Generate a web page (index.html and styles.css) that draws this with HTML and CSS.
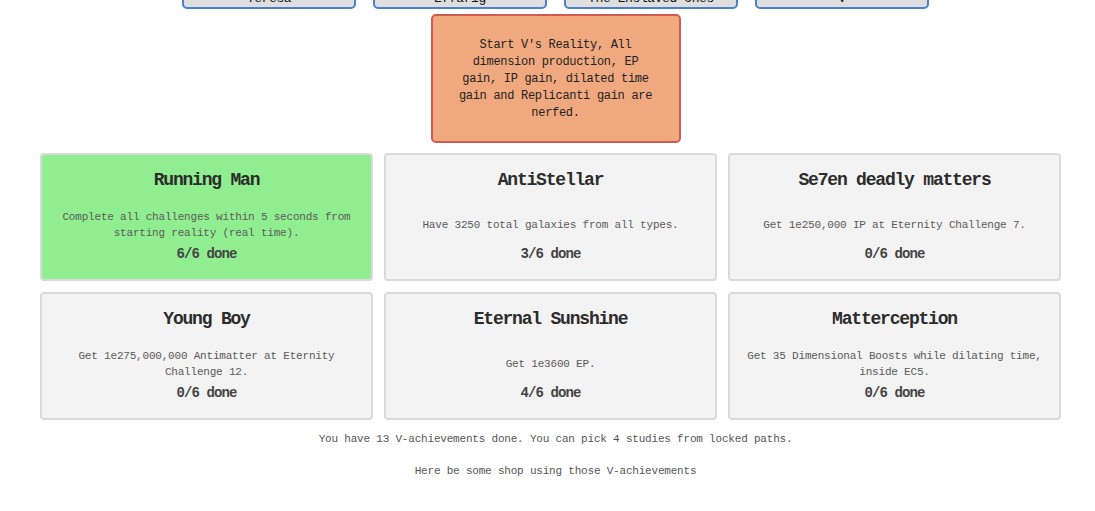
FILE: index.html
```html
<!DOCTYPE html>
<html>
<head>
<meta charset="utf-8">
<link rel="stylesheet" href="styles.css">
</head>
<body>
<div class="page">
  <div class="tabs">
    <div class="tab">Teresa</div>
    <div class="tab">Effarig</div>
    <div class="tab">The Enslaved Ones</div>
    <div class="tab">V</div>
  </div>
  <div class="info-wrap">
    <div class="info">Start V's Reality, All dimension production, EP gain, IP gain, dilated time gain and Replicanti gain are nerfed.</div>
  </div>
  <div class="grid">
    <div class="card done">
      <div class="title">Running Man</div>
      <div class="desc"><span>Complete all challenges within 5 seconds from starting reality (real time).</span></div>
      <div class="count">6/6 done</div>
    </div>
    <div class="card">
      <div class="title">AntiStellar</div>
      <div class="desc"><span>Have 3250 total galaxies from all types.</span></div>
      <div class="count">3/6 done</div>
    </div>
    <div class="card">
      <div class="title">Se7en deadly matters</div>
      <div class="desc"><span>Get 1e250,000 IP at Eternity Challenge 7.</span></div>
      <div class="count">0/6 done</div>
    </div>
    <div class="card">
      <div class="title">Young Boy</div>
      <div class="desc"><span>Get 1e275,000,000 Antimatter at Eternity Challenge 12.</span></div>
      <div class="count">0/6 done</div>
    </div>
    <div class="card">
      <div class="title">Eternal Sunshine</div>
      <div class="desc"><span>Get 1e3600 EP.</span></div>
      <div class="count">4/6 done</div>
    </div>
    <div class="card">
      <div class="title">Matterception</div>
      <div class="desc"><span>Get 35 Dimensional Boosts while dilating time, inside EC5.</span></div>
      <div class="count">0/6 done</div>
    </div>
  </div>
  <p class="note">You have 13 V-achievements done. You can pick 4 studies from locked paths.</p>
  <p class="note shop">Here be some shop using those V-achievements</p>
</div>
</body>
</html>
```
FILE: styles.css
```css
html, body {
  margin: 0;
  padding: 0;
  background: #fff;
}
body {
  font-family: "Liberation Mono", "DejaVu Sans Mono", monospace;
  color: #333;
  overflow: hidden;
}
.page {
  padding-left: 16px;
}
.tabs {
  display: flex;
  justify-content: center;
  gap: 17px;
  margin-top: -23px;
}
.tab {
  width: 174px;
  height: 32px;
  box-sizing: border-box;
  background: #dedede;
  border: 2px solid #4a80cf;
  border-radius: 5px;
  text-align: center;
  font-size: 13px;
  line-height: 40px;
  color: #111;
  letter-spacing: -0.4px;
}
.info-wrap {
  display: flex;
  justify-content: center;
  margin-top: 5px;
}
.info {
  width: 250px;
  height: 129px;
  box-sizing: border-box;
  background: #f0a97e;
  border: 2px solid #d35a52;
  border-radius: 5px;
  padding: 21px 26px 0;
  text-align: center;
  font-size: 12px;
  line-height: 17px;
  letter-spacing: -0.3px;
  color: #222;
}
.grid {
  display: grid;
  grid-template-columns: repeat(3, 333px);
  column-gap: 11px;
  row-gap: 11px;
  margin: 10px 0 0 24px;
  width: 1021px;
}
.card {
  height: 128px;
  box-sizing: border-box;
  background: #f3f3f3;
  border: 2px solid #dadada;
  border-radius: 4px;
  padding: 15px 6px 0;
  text-align: center;
  display: flex;
  flex-direction: column;
}
.card.done {
  background: #90ee90;
}
.title {
  font-size: 18px;
  font-weight: bold;
  line-height: 20px;
  height: 20px;
  letter-spacing: -1.2px;
  color: #2c2c2c;
  margin-bottom: 14px;
}
.desc {
  height: 41px;
  display: flex;
  align-items: center;
  justify-content: center;
  font-size: 11px;
  line-height: 16px;
  letter-spacing: -0.2px;
  color: #5a5a5a;
}
.count {
  font-size: 14px;
  font-weight: bold;
  line-height: 18px;
  letter-spacing: -0.9px;
  color: #444;
}
.note {
  margin: 12px 0 0;
  text-align: center;
  font-size: 11px;
  line-height: 14px;
  letter-spacing: -0.2px;
  color: #555;
}
.note.shop {
  margin-top: 18px;
}
```
